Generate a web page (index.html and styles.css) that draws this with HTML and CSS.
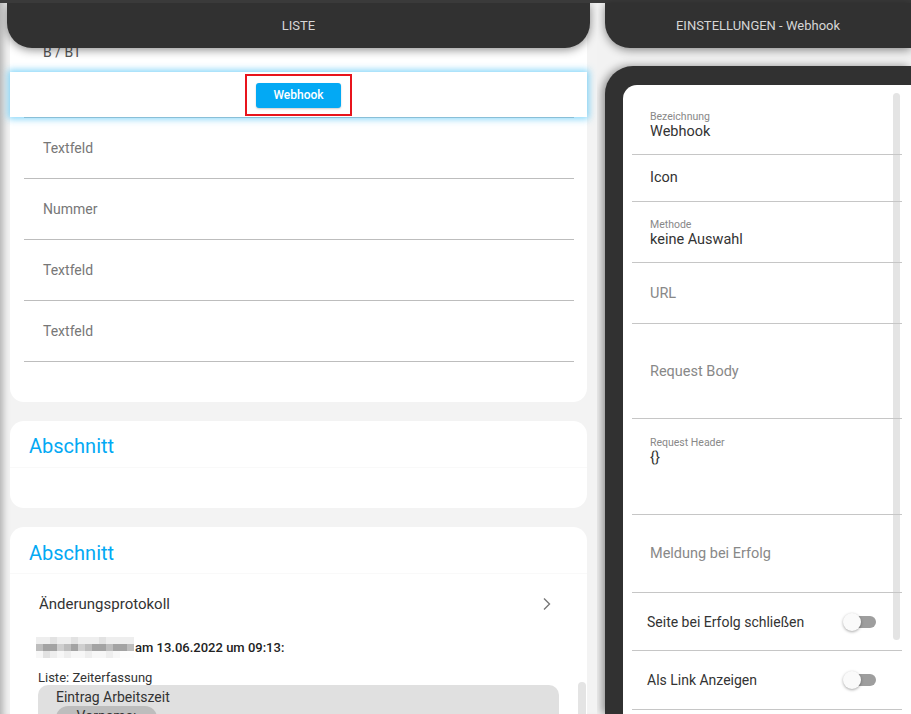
FILE: index.html
```html
<!DOCTYPE html>
<html lang="de">
<head>
<meta charset="utf-8">
<title>Liste – Einstellungen Webhook</title>
<link rel="stylesheet" href="styles.css">
</head>
<body>
<div class="topbar"></div>
<div class="app">
  <section class="left">
    <header class="hdr hdr-left">LISTE</header>
    <div class="scroll">
      <div class="card card-form">
        <div class="row-partial"><span>B / BT</span></div>
        <div class="selected">
          <div class="redbox"><button class="btn">Webhook</button></div>
        </div>
        <div class="fields">
          <div class="field">Textfeld</div>
          <div class="field">Nummer</div>
          <div class="field">Textfeld</div>
          <div class="field">Textfeld</div>
          <div class="field-end"></div>
        </div>
      </div>

      <div class="card card-sec">
        <div class="sec-title">Abschnitt</div>
      </div>

      <div class="card card-log">
        <div class="sec-title">Abschnitt</div>
        <div class="log-link">
          <span>Änderungsprotokoll</span>
          <svg class="chev" width="10" height="14" viewBox="0 0 10 14"><polyline points="2,1.5 7.5,7 2,12.5" fill="none" stroke="#777" stroke-width="1.4"/></svg>
        </div>
        <div class="log-who">
          <div class="blur">
            <i class="c1"></i><i class="c1"></i><i class="c2"></i><i class="c1"></i><i class="c1"></i><i class="c2"></i><i class="c1"></i><i class="c1"></i><i class="c1"></i><i class="c2"></i><i class="c1"></i><i class="c1"></i><i class="c1"></i><i class="c1"></i>
            <i class="d2"></i><i class="d1"></i><i class="d1"></i><i class="d3"></i><i class="d2"></i><i class="d1"></i><i class="d3"></i><i class="d2"></i><i class="d1"></i><i class="d1"></i><i class="d2"></i><i class="d1"></i><i class="d1"></i><i class="d2"></i>
            <i class="c0"></i><i class="c2"></i><i class="c1"></i><i class="c0"></i><i class="c1"></i><i class="c0"></i><i class="c0"></i><i class="c1"></i><i class="c0"></i><i class="c0"></i><i class="c1"></i><i class="c0"></i><i class="c3"></i><i class="c3"></i>
          </div>
          <span class="when">am 13.06.2022 um 09:13:</span>
        </div>
        <div class="log-list">Liste: Zeiterfassung</div>
        <div class="entry">
          <div class="entry-title">Eintrag Arbeitszeit</div>
          <div class="entry-row">
            <span class="pill">Vorname:</span>
            <span class="val"><span class="plus">+</span> Karl</span>
          </div>
        </div>
      </div>
    </div>
    <div class="scrollbar-l"></div>
  </section>

  <section class="right">
    <header class="hdr hdr-right">EINSTELLUNGEN - Webhook</header>
    <div class="panel">
      <div class="sheet">
        <div class="frow r1"><div class="lbl">Bezeichnung</div><div class="val-t">Webhook</div></div>
        <div class="frow r2 center"><div class="val-t">Icon</div></div>
        <div class="frow r3"><div class="lbl">Methode</div><div class="val-t">keine Auswahl</div></div>
        <div class="frow r4 center"><div class="ph">URL</div></div>
        <div class="frow r5 center"><div class="ph">Request Body</div></div>
        <div class="frow r6"><div class="lbl">Request Header</div><div class="val-t">{}</div></div>
        <div class="frow r7 center"><div class="ph">Meldung bei Erfolg</div></div>
        <div class="frow r8 trow"><span>Seite bei Erfolg schließen</span><span class="toggle"><span class="knob"></span></span></div>
        <div class="frow r9 trow"><span>Als Link Anzeigen</span><span class="toggle"><span class="knob"></span></span></div>
        <div class="scrollbar-r"></div>
      </div>
    </div>
  </section>
</div>
</body>
</html>
```

FILE: styles.css
```css
* { box-sizing: border-box; }
html, body { margin: 0; padding: 0; }
body {
  width: 911px;
  height: 714px;
  overflow: hidden;
  background: #f2f2f2;
  font-family: Roboto, "Liberation Sans", Arial, sans-serif;
  color: #333;
  display: flex;
  flex-direction: column;
}
.topbar { height: 3px; background: #3a3a3a; flex: none; }
.app { flex: 1; display: flex; gap: 8px; min-height: 0; }

/* ---------- left ---------- */
.left {
  width: 597px;
  flex: none;
  position: relative;
  overflow: hidden;
  background: #f3f3f3;
  box-shadow: inset 9px 0 7px -6px rgba(0,0,0,0.28);
}
.hdr {
  height: 45px;
  background: #313131;
  color: #d6d6d6;
  font-size: 13px;
  display: flex;
  align-items: center;
  justify-content: center;
  box-shadow: 0 2px 10px rgba(0,0,0,0.45);
}
.hdr-left {
  position: absolute;
  top: 0; left: 7px; right: 7px;
  border-radius: 0 0 25px 25px;
  z-index: 5;
}
.scroll { display: flex; flex-direction: column; gap: 19px; padding: 0 10px; }
.card { background: #fff; border-radius: 14px; }
.card-form { border-radius: 0 0 14px 14px; }
.row-partial { height: 69px; padding: 40px 0 0 33px; font-size: 14px; color: #555; line-height: 18px; }
.selected {
  height: 45px;
  display: flex;
  align-items: center;
  justify-content: center;
  box-shadow: 0 0 7px 2px rgba(79,195,247,0.7);
  position: relative;
  z-index: 1;
  background: #fff;
}
.redbox {
  width: 107px; height: 42px;
  border: 2px solid #e8141c;
  display: flex; align-items: center; justify-content: center;
  margin-top: 1px;
}
.btn {
  width: 85px; height: 25px;
  border: 0; border-radius: 3px;
  background: #03a9f4;
  color: #fff;
  font-family: Roboto, "Liberation Sans", sans-serif;
  font-size: 12px; font-weight: 500;
  box-shadow: 0 1px 2px rgba(0,0,0,0.2);
  padding: 0;
}
.fields { margin: 0 13px 0 14px; }
.field {
  height: 61px;
  border-top: 1px solid #bdbdbd;
  padding-left: 19px;
  display: flex; align-items: center;
  font-size: 14px; color: #777;
}
.field-end { height: 41px; border-top: 1px solid #bdbdbd; }

.card-sec { height: 87px; }
.sec-title {
  height: 47px;
  border-bottom: 1px solid #f9f9f9;
  padding: 13px 0 0 19px;
  font-size: 20px;
  line-height: 24px;
  color: #03a9f4;
}
.card-log .sec-title { padding-top: 14px; }
.card-log { height: 300px; }
.log-link {
  height: 58px;
  display: flex; align-items: center; justify-content: space-between;
  padding: 2px 35px 0 29px;
  font-size: 15px; color: #333;
}
.log-who { display: flex; align-items: center; padding-left: 26px; height: 22px; margin-top: 4px; }
.blur {
  display: grid;
  grid-template-columns: repeat(14, 7px);
  grid-auto-rows: 7px;
  width: 98px;
}
.blur i { display: block; }
.c0 { background: #f7f7f7; }
.c1 { background: #eeeeee; }
.c2 { background: #e2e2e2; }
.c3 { background: #fdfdfd; }
.d1 { background: #a3a3a3; }
.d2 { background: #bdbdbd; }
.d3 { background: #cfcfcf; }
.when { font-size: 13px; font-weight: 500; color: #222; margin-left: 1px; }
.log-list { font-size: 13px; color: #333; padding: 12px 0 0 28px; line-height: 15px; }
.entry {
  margin: 0 28px 0 28px;
  height: 80px;
  background: #e0e0e0;
  border-radius: 10px;
  padding: 4px 0 0 18px;
}
.entry-title { font-size: 14px; line-height: 16px; color: #333; }
.entry-row { display: flex; align-items: center; margin-top: 1px; }
.pill {
  width: 101px; height: 24px;
  background: #bdbdbd;
  border-radius: 12px;
  font-size: 14px; color: #333;
  display: flex; justify-content: center; padding-top: 2px;
}
.val { margin-left: 154px; font-size: 14px; color: #333; padding-top: 4px; }
.plus { color: #888; margin-right: 3px; }
.scrollbar-l {
  position: absolute;
  left: 578px; top: 679px;
  width: 8px; height: 60px;
  background: #e4e4e4;
  border-radius: 4px;
}

/* ---------- right ---------- */
.right { flex: 1; display: flex; flex-direction: column; gap: 18px; min-width: 0; }
.hdr-right { border-radius: 0 0 0 25px; flex: none; }
.panel {
  flex: 1;
  background: #313131;
  border-radius: 28px 0 0 0;
  padding: 19px 0 0 18px;
  box-shadow: -3px 0 9px rgba(0,0,0,0.4);
}
.sheet {
  height: 100%;
  background: #fff;
  border-radius: 14px 0 0 0;
  padding: 0 9px;
  position: relative;
}
.frow { border-bottom: 1px solid #c6c6c6; padding-left: 18px; position: relative; z-index: 1; }
.frow.center { display: flex; align-items: center; }
.lbl { font-size: 10.5px; color: #888; line-height: 13px; }
.val-t { font-size: 14.5px; color: #333; line-height: 18px; }
.ph { font-size: 14.5px; color: #888; }
.r1 { height: 70px; padding-top: 25px; }
.r2 { height: 47px; }
.r3 { height: 61px; padding-top: 16px; }
.r4 { height: 61px; }
.r5 { height: 95px; }
.r6 { height: 96px; padding-top: 17px; }
.r7 { height: 78px; }
.r8 { height: 58px; }
.r9 { height: 59px; }
.trow {
  display: flex; align-items: center; justify-content: space-between;
  padding-left: 15px; padding-right: 26px;
  font-size: 14px; color: #333;
}
.toggle {
  width: 33px; height: 18px;
  position: relative;
  display: block;
}
.toggle::before {
  content: "";
  position: absolute;
  left: 5px; right: 0; top: 3px; height: 12px;
  border-radius: 6px;
  background: #9e9e9e;
}
.knob {
  position: absolute; left: 0; top: 0;
  width: 18px; height: 18px; border-radius: 50%;
  background: #fafafa;
  box-shadow: 0 1px 3px rgba(0,0,0,0.35);
}
.scrollbar-r {
  position: absolute;
  left: 270px; top: 8px;
  width: 7px; height: 547px;
  background: #e4e4e4;
  border-radius: 4px;
  z-index: 0;
}
```
